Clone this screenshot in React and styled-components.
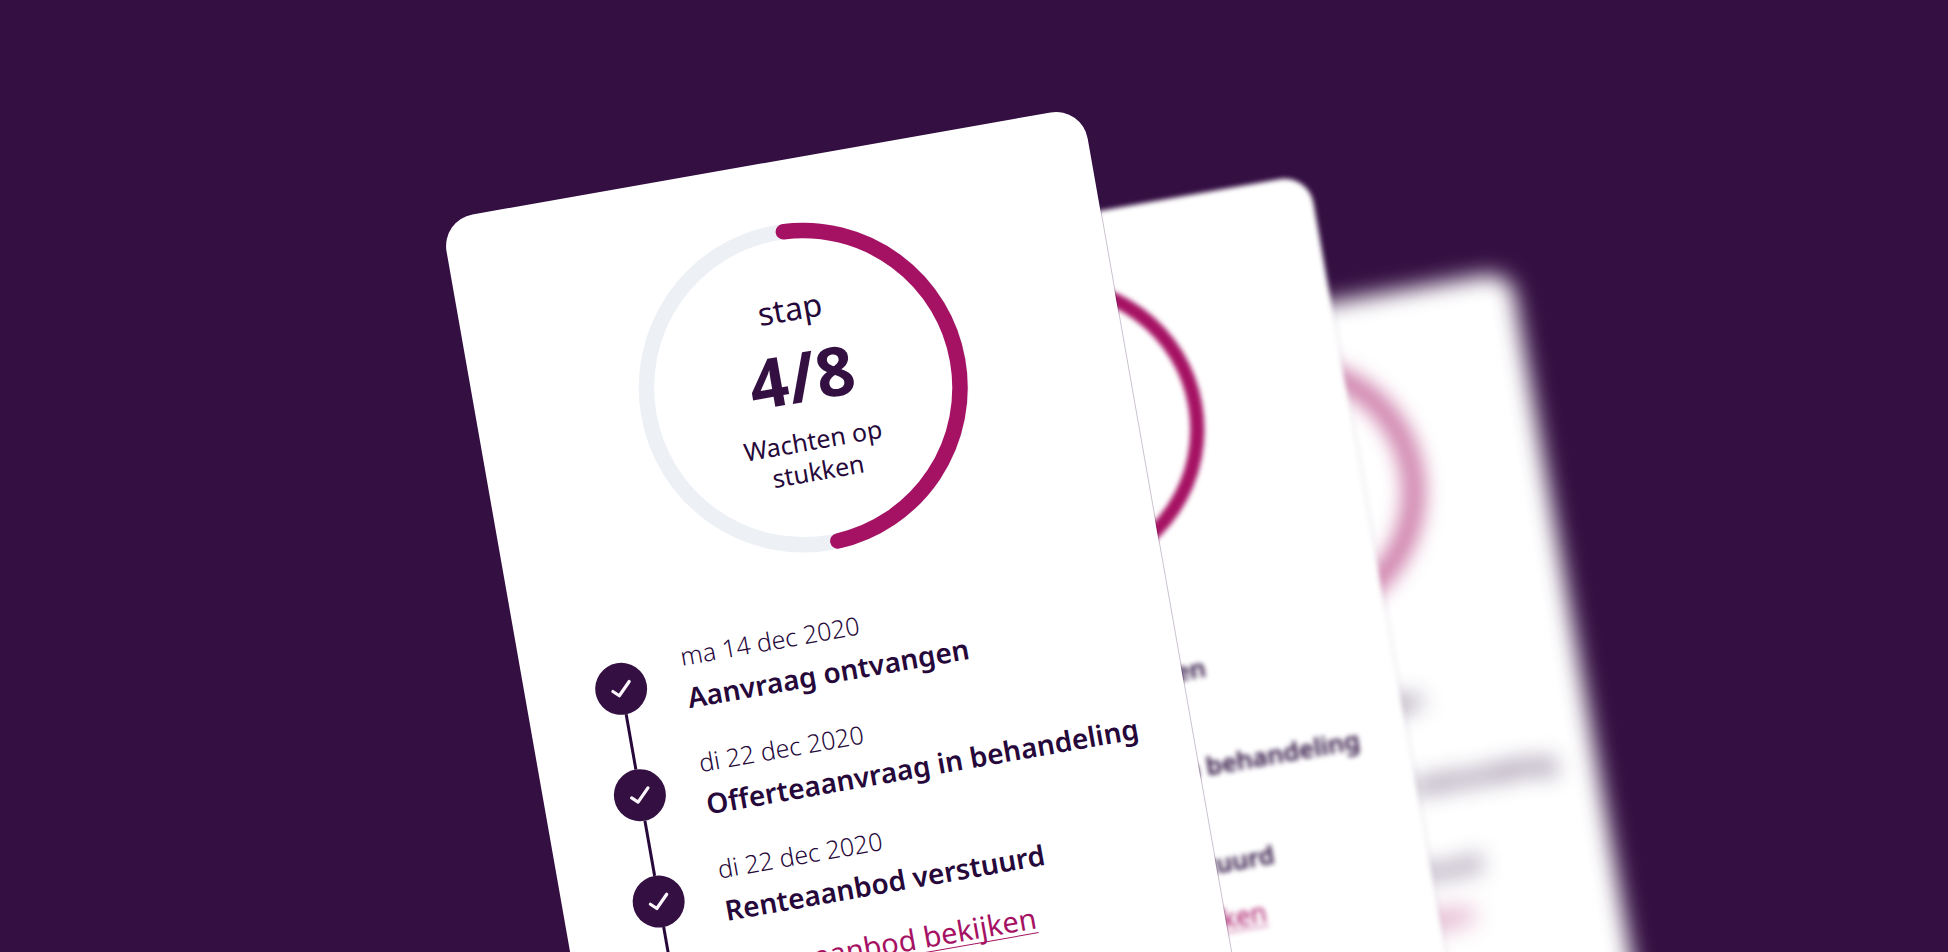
import React from 'react';
import styled, { createGlobalStyle, css } from 'styled-components';

const purple = '#340f42';
const ink = '#26083a';
const magenta = '#a61263';

const GlobalStyle = createGlobalStyle`
  *, *::before, *::after { box-sizing: border-box; }
  body {
    margin: 0;
    background: ${purple};
    color: ${ink};
    font-family: "Noto Sans", "Open Sans", sans-serif;
  }
`;

const Stage = styled.main`
  position: relative;
  min-height: 100vh;
  overflow: hidden;
  background: ${purple};
`;

const depths = {
  front: css`
    left: calc(50% - 533px);
    top: 220px;
    transform: rotate(-10deg);
    box-shadow: 0 0 0 1px rgba(52, 15, 66, 0.25);
  `,
  middle: css`
    left: calc(50% - 249px);
    top: 277px;
    transform: rotate(-10deg) scale(0.91);
    filter: blur(3px);
    box-shadow: 0 0 2px 1px rgba(52, 15, 66, 0.12);
  `,
  back: css`
    left: calc(50% + 30px);
    top: 360px;
    transform: rotate(-10deg) scale(0.79);
    filter: blur(14px);
  `,
};

const CardFrame = styled.article`
  position: absolute;
  display: flex;
  flex-direction: column;
  width: 651px;
  min-height: 1200px;
  padding: 63px 40px 63px 70px;
  border-radius: 32px;
  background: #fff;
  transform-origin: 0 0;
  ${({ $depth }) => depths[$depth]}
`;

const Progress = styled.div`
  display: grid;
  width: 330px;
  height: 330px;
  margin-left: 93px;
  place-items: center;

  > * { grid-area: 1 / 1; }
`;

const ProgressText = styled.div`
  display: flex;
  flex-direction: column;
  align-items: center;
  text-align: center;
`;

const StepWord = styled.span`
  font-size: 32px;
  line-height: 40px;
`;

const StepCount = styled.strong`
  margin: 8px 0 10px;
  color: ${purple};
  font-size: 68px;
  font-weight: 700;
  line-height: 80px;
`;

const StepStatus = styled.p`
  width: 160px;
  margin: 0;
  font-size: 25px;
  line-height: 31px;
`;

const Timeline = styled.ol`
  display: flex;
  flex: 1;
  flex-direction: column;
  margin: 62px 0 0;
  padding: 0;
  list-style: none;
`;

const Item = styled.li`
  display: flex;
  gap: 38px;

  &:last-child { flex: 1; }
`;

const Track = styled.div`
  display: flex;
  flex-direction: column;
  align-items: center;
  padding-top: 12px;
  margin-bottom: -12px;
`;

const Marker = styled.span`
  display: grid;
  width: 52px;
  height: 52px;
  place-items: center;
  border-radius: 50%;
  background: ${purple};
`;

const Connector = styled.span`
  flex: 1;
  width: 3px;
  background: ${ink};
`;

const Details = styled.div`
  padding-bottom: 32px;
  white-space: nowrap;
`;

const StepDate = styled.time`
  display: block;
  font-size: 25px;
  font-weight: 300;
  line-height: 32px;
`;

const StepTitle = styled.h2`
  margin: 8px 0 0;
  font-size: 28px;
  font-weight: 600;
  line-height: 36px;
`;

const StepLink = styled.a`
  display: inline-block;
  margin-top: 25px;
  color: ${magenta};
  font-size: 29px;
  font-weight: 400;
  line-height: 36px;
  text-decoration: underline;
  text-decoration-thickness: 1px;
  text-underline-offset: 4px;
  text-decoration-skip-ink: none;
`;

const steps = [
  { date: 'ma 14 dec 2020', iso: '2020-12-14', title: 'Aanvraag ontvangen' },
  { date: 'di 22 dec 2020', iso: '2020-12-22', title: 'Offerteaanvraag in behandeling' },
  { date: 'di 22 dec 2020', iso: '2020-12-22', title: 'Renteaanbod verstuurd', link: 'Renteaanbod bekijken' },
];

function Ring() {
  return (
    <svg width="330" height="330" viewBox="-165 -165 330 330" fill="none" strokeWidth="15.5" aria-hidden="true">
      <circle r="157.2" stroke="#edf1f6" />
      <path d="M7.1 -157A157.2 157.2 0 0 1 7.1 157" stroke={magenta} strokeLinecap="round" />
    </svg>
  );
}

function Check() {
  return (
    <svg width="28" height="28" viewBox="-14 -14 28 28" fill="none" aria-hidden="true">
      <path d="M-8.6 1.2L-3 6.5L9.2 -5.8" stroke="#fbf7fd" strokeWidth="3.2" strokeLinecap="round" strokeLinejoin="round" />
    </svg>
  );
}

function StatusCard({ depth }) {
  const behind = depth !== 'front';
  return (
    <CardFrame $depth={depth} aria-hidden={behind || undefined} inert={behind}>
      <Progress>
        <Ring />
        <ProgressText>
          <StepWord>stap</StepWord>
          <StepCount>4/8</StepCount>
          <StepStatus>Wachten op stukken</StepStatus>
        </ProgressText>
      </Progress>
      <Timeline>
        {steps.map((step) => (
          <Item key={step.title}>
            <Track>
              <Marker><Check /></Marker>
              <Connector />
            </Track>
            <Details>
              <StepDate dateTime={step.iso}>{step.date}</StepDate>
              <StepTitle>{step.title}</StepTitle>
              {step.link && <StepLink href="#renteaanbod">{step.link}</StepLink>}
            </Details>
          </Item>
        ))}
      </Timeline>
    </CardFrame>
  );
}

export default function App() {
  return (
    <>
      <GlobalStyle />
      <Stage>
        <StatusCard depth="back" />
        <StatusCard depth="middle" />
        <StatusCard depth="front" />
      </Stage>
    </>
  );
}
